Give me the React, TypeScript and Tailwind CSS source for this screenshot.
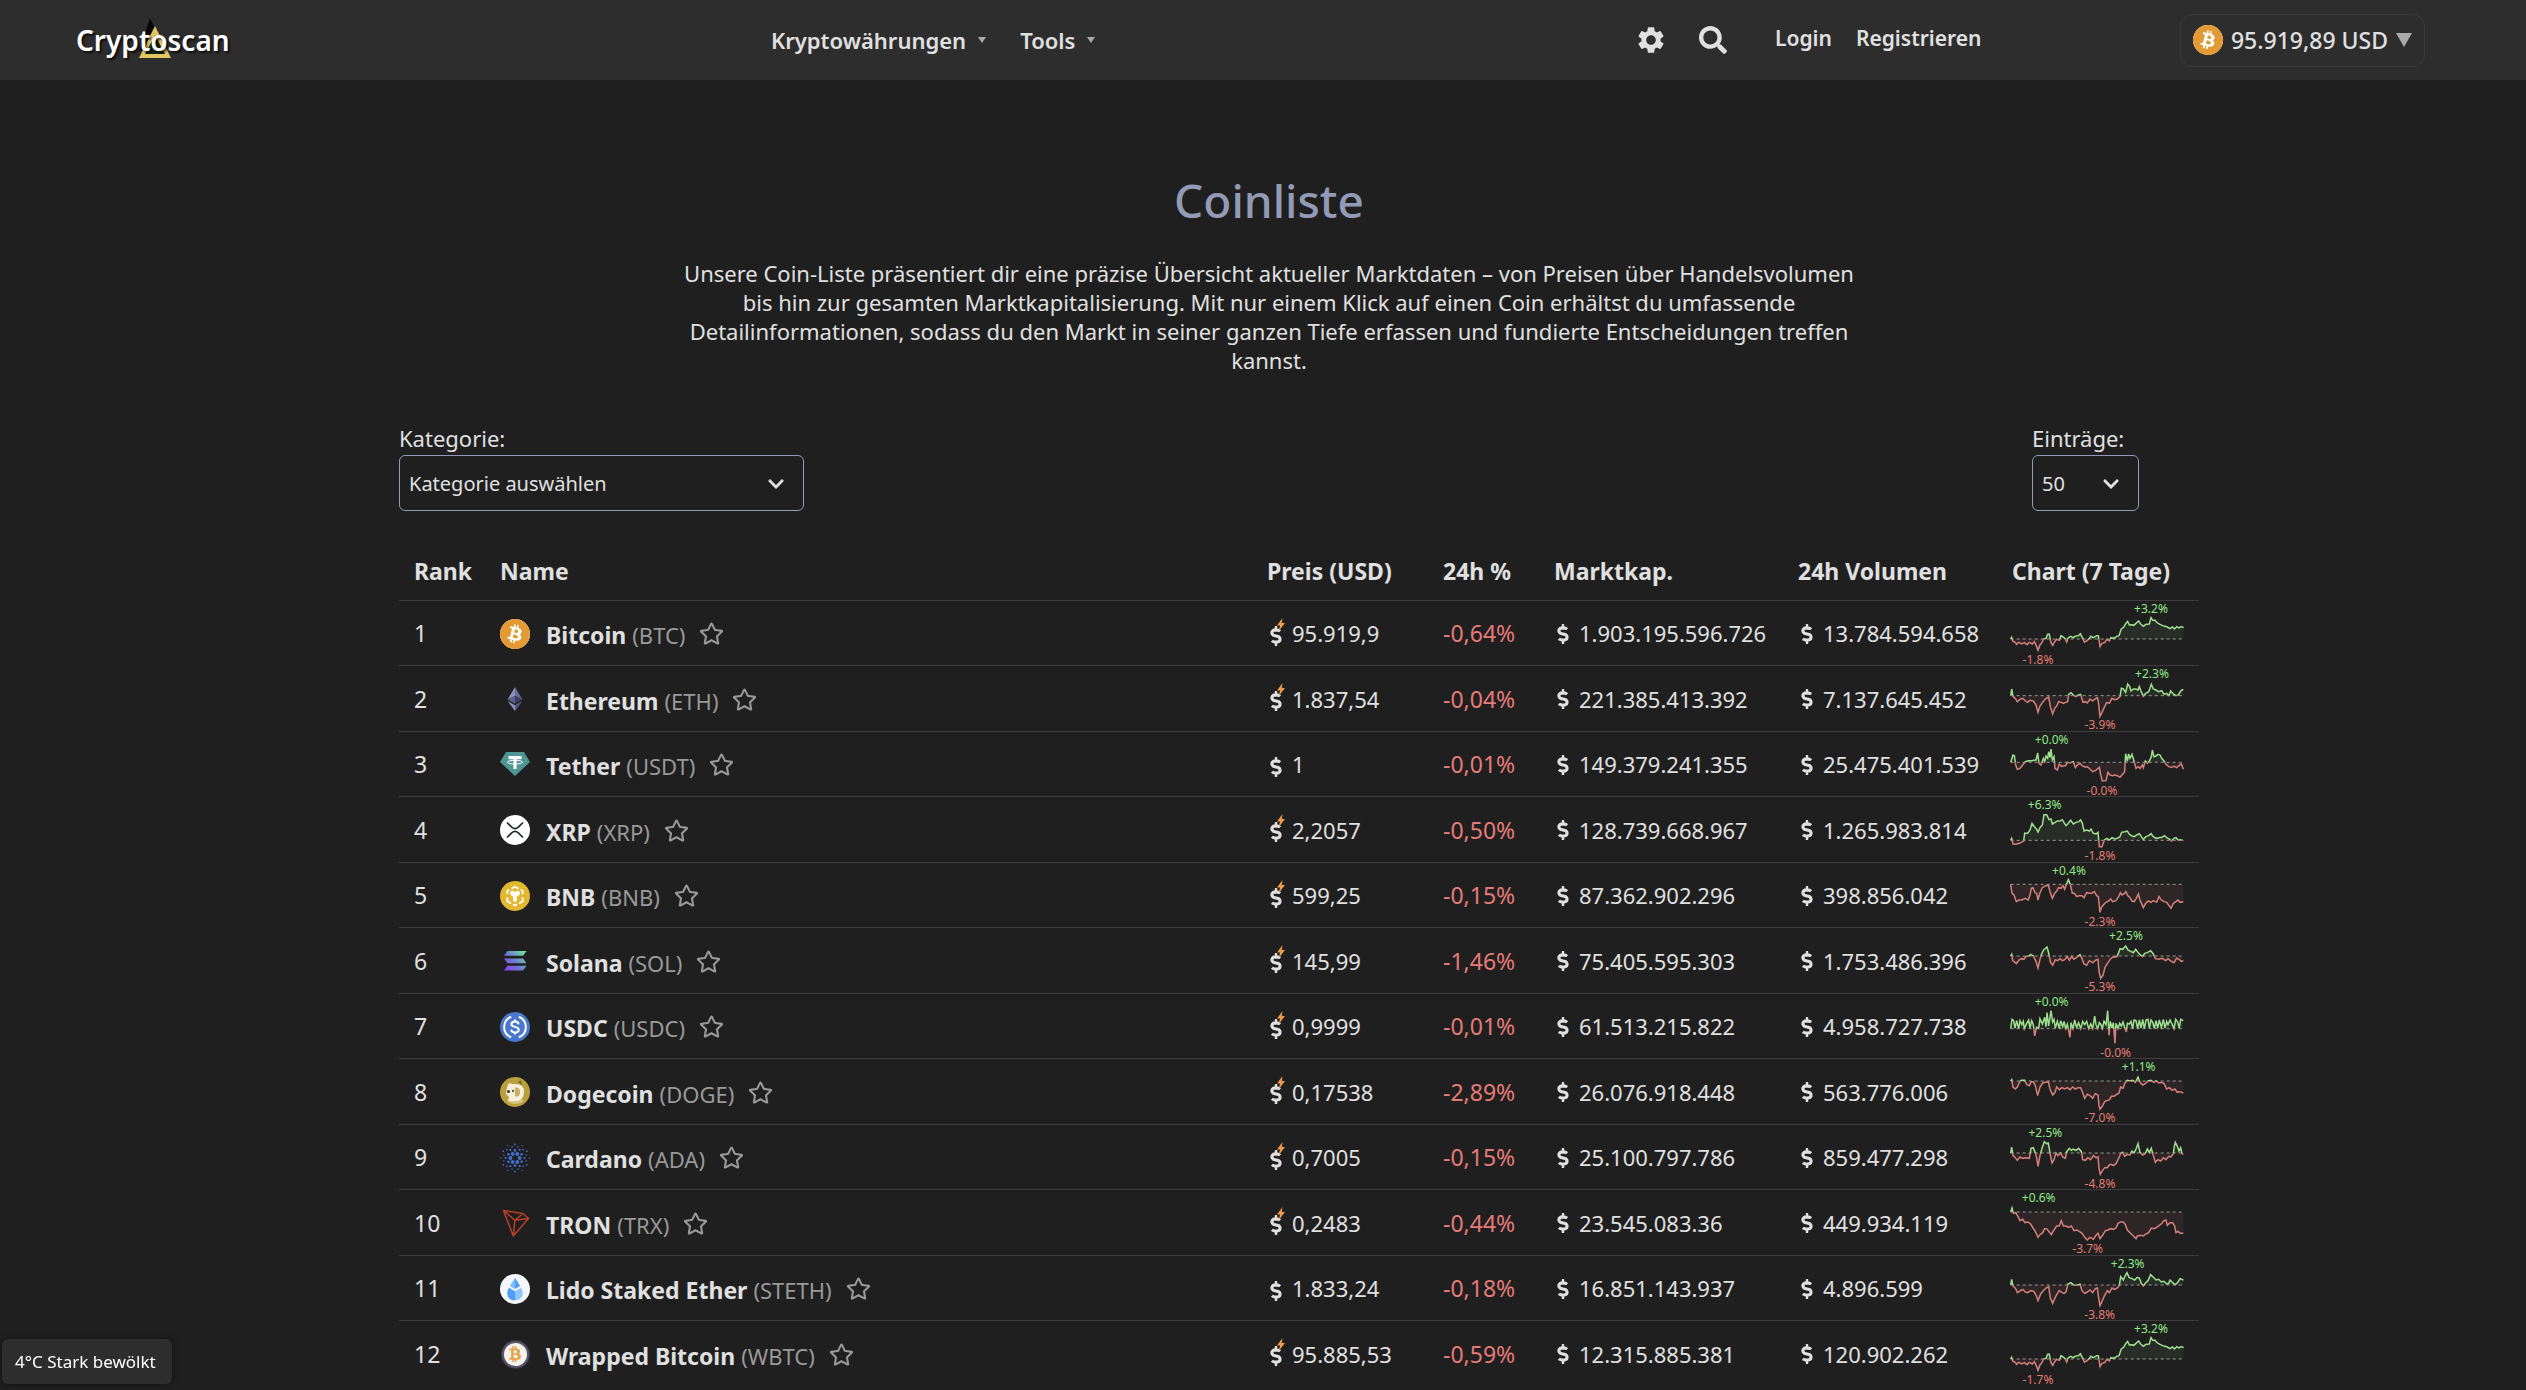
import { useId, type ReactNode } from "react";
import clsx from "clsx";
import { FaBtc, FaChevronDown, FaDollarSign, FaRegStar, FaSearch } from "react-icons/fa";
import { MdSettings } from "react-icons/md";
import { SiBitcoin } from "react-icons/si";

type Coin = {
  name: string;
  symbol: string;
  icon: ReactNode;
  price: string;
  live: boolean;
  change: string;
  cap: string;
  volume: string;
  chart: Spark;
};

type Spark = {
  base: number;
  points: string;
  high: [x: number, label: string];
  low: [x: number, label: string];
};

const BTC_POINTS =
  "0,114 3,109 6,120 13,124 18,130 24,124 33,129 41,125 49,131 56,124 65,129 71,122 76,132 82,148 87,134 94,124 98,115 106,112 111,100 116,100 120,122 126,133 132,122 138,115 146,118 151,104 158,108 164,114 168,123 173,110 180,106 188,110 195,105 203,104 209,98 215,110 221,123 228,120 236,112 241,106 248,110 258,104 263,104 268,137 274,127 282,125 289,115 296,120 301,110 310,112 318,106 325,104 332,84 339,79 345,68 351,61 356,72 364,71 370,73 378,65 384,60 390,69 398,76 406,70 416,69 421,50 426,58 433,58 440,66 448,70 456,74 463,76 470,78 478,83 485,78 491,84 498,77 505,81 512,77 519,80";

function BtcIcon() {
  return (
    <span className="flex size-[30px] items-center justify-center rounded-full bg-white">
      <SiBitcoin className="size-[30px] text-[#e39a34]" />
    </span>
  );
}

function EthIcon() {
  return (
    <svg viewBox="0 0 30 30" className="size-[30px]">
      <path d="M15 3 7.6 15.4 15 12z" fill="#8f90b6" />
      <path d="M15 3v9l7.4 3.4z" fill="#6a6c98" />
      <path d="M7.6 15.4 15 12v7.8z" fill="#5c5e8c" />
      <path d="M22.4 15.4 15 12v7.8z" fill="#3c3d68" />
      <path d="M7.6 16.9 15 27v-5.7z" fill="#8f90b6" />
      <path d="M22.4 16.9 15 27v-5.7z" fill="#5c5e8c" />
    </svg>
  );
}

function TetherIcon() {
  return (
    <svg viewBox="0 0 30 30" className="size-[30px]">
      <path d="M6 2h18l6 10-15 14L0 12z" fill="#4f9593" />
      <path d="M8.5 6h13v3.2h-4.9V19h-3.2V9.2H8.5z" fill="#fff" />
      <ellipse cx="15" cy="12.2" rx="7.6" ry="1.9" fill="none" stroke="#fff" />
    </svg>
  );
}

function XrpIcon() {
  return (
    <svg viewBox="0 0 30 30" className="size-[30px]">
      <circle cx="15" cy="15" r="15" fill="#fff" />
      <path
        d="M7 7.5l4.7 4.6q3.3 3 6.6 0L23 7.5M7 22.5l4.7-4.6q3.3-3 6.6 0l4.7 4.6"
        fill="none"
        stroke="#23292f"
        strokeWidth="1.7"
      />
    </svg>
  );
}

function BnbIcon() {
  return (
    <svg viewBox="0 0 30 30" className="size-[30px]">
      <circle cx="15" cy="15" r="15" fill="#e2b831" />
      <path
        d="M11.5 7.8 15 5.8l3.5 2M7.3 13v-3l2-1.2M22.7 13v-3l-2-1.2M7.3 16.5v3.7l3.7 2.2M22.7 16.5v3.7L19 22.4M13 23.3l2 1.2 2-1.2"
        fill="none"
        stroke="#fff"
        strokeWidth="1.8"
      />
      <path d="M10.3 10.8 12.5 9.5 15 11l2.5-1.5 2.2 1.3v3L17 15.5v4.3l-2 1.2-2-1.2v-4.3l-2.7-1.7z" fill="#fff" />
    </svg>
  );
}

function SolanaIcon() {
  return (
    <svg viewBox="0 0 30 30" className="size-[30px]">
      <defs>
        <linearGradient id="sol" x1="4" y1="25" x2="26" y2="5" gradientUnits="userSpaceOnUse">
          <stop offset="0.1" stopColor="#8a45f0" />
          <stop offset="0.5" stopColor="#6a80d0" />
          <stop offset="1" stopColor="#6ff09a" />
        </linearGradient>
      </defs>
      <path
        d="M7.5 5H26.5l-3.5 4.8H4zM4 12.4h19l3.5 4.8h-19zM7.5 19.8h19L23 24.6H4z"
        fill="url(#sol)"
      />
    </svg>
  );
}

function UsdcIcon() {
  return (
    <svg viewBox="0 0 30 30" className="size-[30px]">
      <circle cx="15" cy="15" r="15" fill="#4a78cc" />
      <g fill="none" stroke="#fff" strokeWidth="2">
        <path d="M11.2 4.8a10.9 10.9 0 0 0 0 20.4M18.8 4.8a10.9 10.9 0 0 1 0 20.4" />
        <path d="M18.6 12.3c-.2-1.8-1.6-2.7-3.6-2.7s-3.5 1-3.5 2.6c0 3.6 7.3 1.7 7.3 5.6 0 1.7-1.6 2.7-3.8 2.7s-3.6-1-3.8-2.9M15 7.5v2M15 20.5v2" />
      </g>
    </svg>
  );
}

function DogeIcon() {
  return (
    <svg viewBox="0 0 30 30" className="size-[30px]">
      <circle cx="15" cy="15" r="15" fill="#b8a03c" />
      <path d="M7 24q8-6 17 0-8 6-17 0z" fill="#d9c884" />
      <path d="M7 10l2-4 3 1h4q8 0 8 8 0 9-9 9H8l1-4-3-3z" fill="#f6efdd" />
      <path d="M15 10.5h1.2q3.8 0 3.8 4.5t-3.8 4.5H15z" fill="#c7b061" />
      <circle cx="8.5" cy="14.5" r="1.5" fill="#3c3217" />
      <circle cx="13" cy="14" r="1.2" fill="#6f5f2a" />
      <path d="m18 5 3-1.5L22 8z" fill="#6f5f2a" />
    </svg>
  );
}

const ADA_RINGS = [
  { count: 6, radius: 4.6, size: 2, turn: 0 },
  { count: 6, radius: 7.6, size: 1.3, turn: 30 },
  { count: 6, radius: 9.4, size: 1.1, turn: 0 },
  { count: 12, radius: 11.5, size: 0.8, turn: 15 },
  { count: 6, radius: 13.6, size: 0.9, turn: 30 },
  { count: 6, radius: 14.3, size: 0.7, turn: 0 },
];

function CardanoIcon() {
  return (
    <svg viewBox="0 0 30 30" className="size-[30px]" fill="#456dcb">
      {ADA_RINGS.map((ring, r) =>
        Array.from({ length: ring.count }, (_, i) => {
          const angle = ((i * 360) / ring.count + ring.turn) * (Math.PI / 180);
          return (
            <circle
              key={`${r}-${i}`}
              cx={15 + ring.radius * Math.cos(angle)}
              cy={15 + ring.radius * Math.sin(angle)}
              r={ring.size}
            />
          );
        })
      )}
    </svg>
  );
}

function TronIcon() {
  return (
    <svg viewBox="0 0 30 30" className="size-[30px]">
      <path
        d="M3.5 2.5 23 5.5l5.5 5L13.3 28zM3.5 2.5 15 12.2 23 5.5M15 12.2l13.5-1.7M15 12.2 13.3 28"
        fill="none"
        stroke="#b83e2b"
        strokeWidth="1.5"
        strokeLinejoin="round"
      />
    </svg>
  );
}

function LidoIcon() {
  return (
    <svg viewBox="0 0 30 30" className="size-[30px]">
      <circle cx="15" cy="15" r="15" fill="#f5f7fa" />
      <path d="M15 3.8 9.8 12 15 15z" fill="#7cbcff" />
      <path d="M15 3.8 20.2 12 15 15z" fill="#4f9ff7" />
      <path d="M9 13.8 15 17.3v9c-8 0-9.5-7.5-6-12.5z" fill="#4f9ff7" />
      <path d="M21 13.8 15 17.3v9c8 0 9.5-7.5 6-12.5z" fill="#8ec5ff" />
    </svg>
  );
}

function WbtcIcon() {
  return (
    <span className="flex size-[30px] items-center justify-center">
      <span className="flex size-[27px] items-center justify-center rounded-full border-2 border-[#5a5564] bg-[#f4f2ef] ring-1 ring-[#3a3644]">
        <FaBtc className="size-4 text-[#e8a24a]" />
      </span>
    </span>
  );
}

const COINS: Coin[] = [
  {
    name: "Bitcoin",
    symbol: "BTC",
    icon: <BtcIcon />,
    price: "95.919,9",
    live: true,
    change: "-0,64%",
    cap: "1.903.195.596.726",
    volume: "13.784.594.658",
    chart: { base: 114, points: BTC_POINTS, high: [421, "+3.2%"], low: [82, "-1.8%"] },
  },
  {
    name: "Ethereum",
    symbol: "ETH",
    icon: <EthIcon />,
    price: "1.837,54",
    live: true,
    change: "-0,04%",
    cap: "221.385.413.392",
    volume: "7.137.645.452",
    chart: {
      base: 89,
      points:
        "0,89 3,69 7,91 15,99 20,107 28,100 36,97 44,105 51,109 58,103 68,105 76,117 82,139 88,120 96,109 104,99 114,93 119,122 126,144 132,127 138,120 144,107 151,109 158,112 165,109 171,107 174,85 181,80 188,87 195,92 203,87 210,85 217,109 224,107 230,111 238,99 246,105 253,99 260,95 263,107 268,151 274,139 282,122 288,109 296,112 304,97 312,101 320,99 328,92 332,67 338,69 345,79 351,54 357,62 361,75 368,69 375,69 382,72 386,62 391,75 398,91 405,82 414,77 422,55 428,69 436,72 444,77 453,74 460,85 468,82 475,89 480,75 488,84 496,89 503,87 511,74 518,70",
      high: [424, "+2.3%"],
      low: [268, "-3.9%"],
    },
  },
  {
    name: "Tether",
    symbol: "USDT",
    icon: <TetherIcon />,
    price: "1",
    live: false,
    change: "-0,01%",
    cap: "149.379.241.355",
    volume: "25.475.401.539",
    chart: {
      base: 91,
      points:
        "0,91 7,69 11,71 15,99 20,112 28,109 36,99 44,89 53,86 63,86 76,84 81,63 85,94 91,99 98,79 102,89 106,72 111,79 114,59 118,77 121,51 125,84 130,74 133,109 140,114 146,97 154,104 160,101 165,101 170,91 178,93 188,89 194,107 200,99 208,94 214,101 222,105 230,104 238,111 246,119 254,116 260,111 266,106 270,129 275,147 286,146 292,121 298,129 306,131 312,129 320,131 328,136 336,127 342,119 345,65 350,87 354,66 358,79 364,67 370,87 376,109 382,104 388,109 395,99 398,107 404,87 410,94 416,87 422,74 425,54 430,74 436,72 442,67 448,69 453,79 460,87 466,97 474,104 482,106 490,103 498,107 505,101 512,96 518,112",
      high: [123, "+0.0%"],
      low: [274, "-0.0%"],
    },
  },
  {
    name: "XRP",
    symbol: "XRP",
    icon: <XrpIcon />,
    price: "2,2057",
    live: true,
    change: "-0,50%",
    cap: "128.739.668.967",
    volume: "1.265.983.814",
    chart: {
      base: 130,
      points:
        "0,130 3,124 7,141 15,142 26,139 36,134 39,132 42,109 51,109 58,99 64,79 71,89 76,94 82,105 88,92 95,84 100,53 108,53 115,68 121,66 125,81 133,76 140,72 148,72 155,68 160,77 166,86 171,81 180,70 188,81 196,76 204,74 210,69 215,79 220,102 228,99 236,102 241,96 248,109 256,111 262,106 266,149 274,149 281,129 288,124 296,129 304,122 312,126 320,124 328,119 333,106 342,104 350,102 356,112 364,117 371,119 378,114 386,110 392,119 398,127 406,119 414,116 421,110 428,119 436,124 446,122 454,121 461,116 468,122 476,126 482,132 490,124 496,122 503,130 510,128 518,131",
      high: [102, "+6.3%"],
      low: [268, "-1.8%"],
    },
  },
  {
    name: "BNB",
    symbol: "BNB",
    icon: <BnbIcon />,
    price: "599,25",
    live: true,
    change: "-0,15%",
    cap: "87.362.902.296",
    volume: "398.856.042",
    chart: {
      base: 64,
      points:
        "0,64 4,91 10,96 17,116 25,111 34,111 43,106 53,111 58,96 62,76 67,74 73,89 78,91 82,111 88,89 95,74 102,70 113,66 118,86 125,106 132,91 138,84 144,74 151,76 157,68 162,79 168,62 173,50 179,64 185,91 191,91 198,101 206,98 214,98 220,104 228,89 236,91 244,91 251,86 258,98 263,101 268,148 272,134 278,126 286,118 294,114 300,108 306,116 316,113 324,101 329,89 334,96 342,91 346,86 351,98 358,104 364,114 371,116 378,104 383,93 388,111 398,134 405,121 413,114 421,118 428,113 438,118 445,101 452,111 460,116 468,118 476,129 481,136 488,121 496,116 502,111 508,118 518,116",
      high: [175, "+0.4%"],
      low: [268, "-2.3%"],
    },
  },
  {
    name: "Solana",
    symbol: "SOL",
    icon: <SolanaIcon />,
    price: "145,99",
    live: true,
    change: "-1,46%",
    cap: "75.405.595.303",
    volume: "1.753.486.396",
    chart: {
      base: 84,
      points:
        "0,84 3,79 6,98 17,107 25,96 33,92 40,94 45,86 54,84 60,79 68,84 76,100 82,120 87,98 93,77 99,66 109,57 114,75 119,102 126,112 134,95 141,98 148,92 155,98 162,95 170,86 176,97 183,86 190,94 198,88 208,80 214,92 220,108 228,112 236,98 246,104 256,96 262,94 265,130 270,151 277,142 283,118 292,104 300,92 309,86 318,87 324,74 328,62 336,64 345,54 352,66 360,70 368,74 375,64 384,76 395,86 402,76 410,74 420,68 428,78 434,92 445,94 455,91 465,98 472,92 482,100 490,104 498,90 505,94 512,100 518,98",
      high: [346, "+2.5%"],
      low: [268, "-5.3%"],
    },
  },
  {
    name: "USDC",
    symbol: "USDC",
    icon: <UsdcIcon />,
    price: "0,9999",
    live: true,
    change: "-0,01%",
    cap: "61.513.215.822",
    volume: "4.958.727.738",
    chart: {
      base: 104,
      points:
        "0,104 4,76 9,80 13,102 18,80 24,104 28,80 34,92 38,82 41,104 48,88 54,78 58,102 63,80 68,92 72,126 78,100 84,104 88,74 95,90 102,70 106,98 109,56 114,96 121,50 126,84 130,76 134,102 140,82 146,104 150,80 156,98 160,82 165,104 170,90 178,130 181,86 187,104 192,78 198,100 204,86 210,104 216,82 222,92 228,82 234,104 240,90 246,104 252,66 256,92 261,104 266,86 271,92 275,104 280,82 286,92 291,50 295,124 299,82 304,102 308,86 313,148 316,88 322,104 327,88 332,96 337,84 343,104 347,114 350,88 356,90 361,82 366,104 370,78 376,80 381,104 386,78 391,102 396,76 401,104 406,78 412,76 416,102 421,78 426,84 431,104 436,80 441,102 446,78 452,100 458,76 463,102 468,82 472,92 478,78 484,90 490,104 495,76 501,84 506,102 510,76 518,80",
      high: [123, "+0.0%"],
      low: [315, "-0.0%"],
    },
  },
  {
    name: "Dogecoin",
    symbol: "DOGE",
    icon: <DogeIcon />,
    price: "0,17538",
    live: true,
    change: "-2,89%",
    cap: "26.076.918.448",
    volume: "563.776.006",
    chart: {
      base: 66,
      points:
        "0,66 3,62 7,84 14,90 20,84 26,70 32,64 42,64 48,76 56,80 62,68 68,68 74,80 81,110 88,84 96,72 104,70 113,68 118,90 126,108 133,100 138,84 146,92 154,86 162,90 170,86 178,92 186,84 194,90 202,86 210,86 218,106 222,118 230,106 238,110 246,118 254,104 262,108 265,140 268,151 275,142 282,128 290,124 297,122 302,112 310,112 318,106 325,102 330,84 337,88 343,72 350,64 358,66 366,64 374,70 382,54 388,70 396,78 404,74 412,66 420,64 430,70 436,66 444,72 452,70 460,74 468,90 476,86 484,94 492,90 500,100 508,98 518,102",
      high: [384, "+1.1%"],
      low: [268, "-7.0%"],
    },
  },
  {
    name: "Cardano",
    symbol: "ADA",
    icon: <CardanoIcon />,
    price: "0,7005",
    live: true,
    change: "-0,15%",
    cap: "25.100.797.786",
    volume: "859.477.298",
    chart: {
      base: 84,
      points:
        "0,84 3,66 7,92 14,98 20,106 28,96 36,100 44,98 56,100 61,70 68,68 74,84 78,98 82,124 88,92 94,70 101,50 108,56 113,54 118,84 124,114 130,104 136,84 142,92 150,84 156,96 164,100 168,80 176,70 182,76 188,72 196,76 204,70 212,80 216,104 224,106 232,98 240,104 248,92 256,98 262,96 265,130 269,148 276,136 282,128 290,128 296,120 302,118 308,122 316,116 324,100 330,86 336,82 342,94 350,88 358,90 364,78 370,84 376,72 382,56 388,82 396,90 404,86 410,72 416,82 422,70 428,92 434,112 442,104 450,108 458,98 466,104 474,94 480,96 488,86 491,64 494,52 500,64 505,78 510,68 514,86 518,88",
      high: [104, "+2.5%"],
      low: [268, "-4.8%"],
    },
  },
  {
    name: "TRON",
    symbol: "TRX",
    icon: <TronIcon />,
    price: "0,2483",
    live: true,
    change: "-0,44%",
    cap: "23.545.083.36",
    volume: "449.934.119",
    chart: {
      base: 66,
      points:
        "0,66 4,54 8,70 15,68 22,80 28,92 36,88 43,98 52,96 60,102 67,114 74,124 82,142 88,134 96,128 102,116 108,116 114,124 122,134 130,120 138,108 146,108 152,92 158,108 166,108 174,112 182,108 190,122 198,120 206,124 214,130 222,142 230,150 238,142 248,148 256,136 262,130 268,146 276,136 284,122 292,120 300,116 308,118 316,114 322,100 330,96 338,96 344,104 350,120 358,128 366,136 376,146 380,138 390,136 398,138 406,132 414,128 422,114 430,116 438,112 446,106 454,100 460,92 466,90 470,106 478,98 486,98 492,108 496,128 502,124 508,130 518,130",
      high: [84, "+0.6%"],
      low: [231, "-3.7%"],
    },
  },
  {
    name: "Lido Staked Ether",
    symbol: "STETH",
    icon: <LidoIcon />,
    price: "1.833,24",
    live: false,
    change: "-0,18%",
    cap: "16.851.143.937",
    volume: "4.896.599",
    chart: {
      base: 87,
      points:
        "0,87 3,70 7,90 15,98 20,110 28,105 36,100 44,108 51,110 60,104 70,106 76,118 82,134 90,114 98,104 106,96 114,92 119,126 126,142 132,128 138,116 146,104 154,110 160,112 166,108 172,84 181,80 190,88 200,88 208,84 214,104 222,112 230,108 238,102 246,110 254,98 260,96 263,120 268,149 274,136 282,118 290,104 296,110 304,96 312,100 320,96 326,88 330,62 338,72 343,60 349,50 355,64 364,68 372,72 380,64 386,66 392,82 398,90 405,80 412,74 420,56 428,64 436,72 444,70 452,78 460,76 468,84 474,82 478,72 486,80 494,86 502,78 508,68 518,72",
      high: [351, "+2.3%"],
      low: [267, "-3.8%"],
    },
  },
  {
    name: "Wrapped Bitcoin",
    symbol: "WBTC",
    icon: <WbtcIcon />,
    price: "95.885,53",
    live: true,
    change: "-0,59%",
    cap: "12.315.885.381",
    volume: "120.902.262",
    chart: { base: 114, points: BTC_POINTS, high: [421, "+3.2%"], low: [82, "-1.7%"] },
  },
];

function Sparkline({ base, points, high, low }: Spark) {
  const id = useId();
  const area = `0,${base} ${points} 518,${base}`;

  return (
    <svg viewBox="4 0 522 195" className="block h-[65px] w-[174px] overflow-visible">
      <clipPath id={`${id}-up`}>
        <rect x="-3" y="0" width="528" height={base} />
      </clipPath>
      <clipPath id={`${id}-down`}>
        <rect x="-3" y={base} width="528" height={195 - base} />
      </clipPath>
      <line x1="0" x2="518" y1={base} y2={base} stroke="#999" strokeWidth="3" strokeDasharray="9 9" />
      <g clipPath={`url(#${id}-up)`}>
        <polygon points={area} fill="#98e08a" fillOpacity="0.08" />
        <polyline points={points} fill="none" stroke="#9fe08f" strokeWidth="4.5" />
      </g>
      <g clipPath={`url(#${id}-down)`}>
        <polygon points={area} fill="#e0807a" fillOpacity="0.08" />
        <polyline points={points} fill="none" stroke="#d4807a" strokeWidth="4.5" />
      </g>
      <g fontSize="36" textAnchor="middle">
        <text x={high[0]} y="36" fill="#8fe888">
          {high[1]}
        </text>
        <text x={low[0]} y="189" fill="#e57b73">
          {low[1]}
        </text>
      </g>
    </svg>
  );
}

function Amount({ value }: { value: string }) {
  return (
    <span className="flex items-center gap-[7px] text-[22px] whitespace-nowrap">
      <FaDollarSign className="h-5 w-[18px] shrink-0" />
      {value}
    </span>
  );
}

function Price({ value, live }: { value: string; live: boolean }) {
  return (
    <span className="flex items-center gap-[7px] text-[22px]">
      <span className="relative pt-1">
        <FaDollarSign className="h-5 w-[18px]" />
        {live && (
          <svg viewBox="0 0 8 13" className="absolute -top-1 right-0 h-[13px] w-2">
            <path d="M5.5 0 0 7.5h3L1.8 13 8 5H4.8z" fill="#ec9a4b" />
          </svg>
        )}
      </span>
      {value}
    </span>
  );
}

function Logo() {
  return (
    <a href="/" className="relative text-[28px] leading-[36px] font-semibold text-white" aria-label="Cryptoscan">
      <svg viewBox="0 0 34 44" className="absolute -top-1 left-[62px] h-11 w-[34px]">
        <path d="M12 0 1 33h9l8-21z" fill="#080808" />
        <path d="M17 8 1 40h32z" fill="#e3c562" />
        <path d="M17 17 7 36h20z" fill="#15240f" />
      </svg>
      <span className="relative [text-shadow:2px_2px_2px_#000a]">Cryptoscan</span>
    </a>
  );
}

function Header() {
  return (
    <header className="grid h-20 grid-cols-[695px_1fr_auto] items-center bg-[#2d2d2d] pr-[101px] pl-[76px]">
      <Logo />
      <div className="flex items-center">
        <nav className="flex w-[864px] gap-[34px] text-[22px] font-semibold">
          <button className="flex items-center gap-3">
            Kryptowährungen
            <span className="border-x-4 border-t-[6px] border-x-transparent border-t-[#aaa]" />
          </button>
          <button className="flex items-center gap-3">
            Tools
            <span className="border-x-4 border-t-[6px] border-x-transparent border-t-[#aaa]" />
          </button>
        </nav>
        <button aria-label="Einstellungen">
          <MdSettings className="size-8" />
        </button>
        <button aria-label="Suche" className="ml-8">
          <FaSearch className="size-7" />
        </button>
        <div className="mb-0.5 ml-12 flex gap-6 text-[21px] font-semibold">
          <a href="/login">Login</a>
          <a href="/register">Registrieren</a>
        </div>
      </div>
      <button className="flex h-[53px] items-center gap-2 rounded-xl border border-[#3a3a3a] px-3 text-[23px] font-medium">
        <BtcIcon />
        95.919,89 USD
        <span className="border-x-8 border-t-[14px] border-x-transparent border-t-[#aaa]" />
      </button>
    </header>
  );
}

function Picker({ id, label, options, className }: { id: string; label: string; options: string[]; className: string }) {
  return (
    <div className={className}>
      <label htmlFor={id} className="block text-[22px] leading-[33px]">
        {label}
      </label>
      <div className="relative">
        <select
          id={id}
          className="h-14 w-full appearance-none rounded-md border border-[#929ab5] bg-[#1f1f1f] px-[9px] pt-0.5 text-[20px]"
        >
          {options.map((option) => (
            <option key={option}>{option}</option>
          ))}
        </select>
        <FaChevronDown className="pointer-events-none absolute top-5 right-[19px] size-[18px]" />
      </div>
    </div>
  );
}

function CoinTable() {
  return (
    <table className="mt-[33px] w-[1800px] table-fixed text-left">
      <colgroup>
        <col className="w-[86px]" />
        <col />
        <col className="w-[176px]" />
        <col className="w-[111px]" />
        <col className="w-[244px]" />
        <col className="w-[214px]" />
        <col className="w-[202px]" />
      </colgroup>
      <thead>
        <tr className="h-14 border-b border-[#3d3d3d] text-[23px] *:px-[15px] *:pb-0.5 *:font-bold">
          <th>Rank</th>
          <th>Name</th>
          <th>Preis (USD)</th>
          <th>24h %</th>
          <th>Marktkap.</th>
          <th>24h Volumen</th>
          <th>Chart (7 Tage)</th>
        </tr>
      </thead>
      <tbody>
        {COINS.map((coin, i) => (
          <tr
            key={coin.symbol}
            className={clsx(
              "border-[#3d3d3d] *:px-[15px] *:py-0",
              i % 2 ? "h-[66px]" : "h-[65px]",
              i < COINS.length - 1 && "border-b"
            )}
          >
            <td>
              <div className="pt-0.5">{i + 1}</div>
            </td>
            <td>
              <div className="flex items-center pt-0.5">
                {coin.icon}
                <span className="mt-1 ml-4 font-bold">{coin.name}</span>
                <span className="mt-1 ml-1.5 text-[22px] text-[#999]">({coin.symbol})</span>
                <button aria-label={`${coin.name} merken`} className="ml-3.5">
                  <FaRegStar className="size-[25px] text-[#999]" />
                </button>
              </div>
            </td>
            <td>
              <div className="pt-0.5">
                <Price value={coin.price} live={coin.live} />
              </div>
            </td>
            <td>
              <div className="pt-0.5 text-[#e57b78]">{coin.change}</div>
            </td>
            <td>
              <div className="pt-0.5">
                <Amount value={coin.cap} />
              </div>
            </td>
            <td>
              <div className="pt-0.5">
                <Amount value={coin.volume} />
              </div>
            </td>
            <td>
              <div className="h-16">
                <Sparkline {...coin.chart} />
              </div>
            </td>
          </tr>
        ))}
      </tbody>
    </table>
  );
}

export default function App() {
  return (
    <div className="h-screen overflow-hidden bg-[#1f1f1f] font-['Noto_Sans','Open_Sans',sans-serif] text-[23px] text-[#e0e0e0]">
      <Header />
      <main className="pl-3">
        <h1 className="mt-[88px] text-center text-[46px] leading-[64px] font-medium text-[#929ab5]">Coinliste</h1>
        <p className="mx-auto mt-[27px] max-w-[1200px] text-center text-[22px] leading-[29px]">
          Unsere Coin-Liste präsentiert dir eine präzise Übersicht aktueller Marktdaten – von Preisen über Handelsvolumen
          bis hin zur gesamten Marktkapitalisierung. Mit nur einem Klick auf einen Coin erhältst du umfassende
          Detailinformationen, sodass du den Markt in seiner ganzen Tiefe erfassen und fundierte Entscheidungen treffen
          kannst.
        </p>
        <div className="mx-auto mt-[47px] max-w-[1740px]">
          <div className="flex justify-between">
            <Picker
              id="category"
              label="Kategorie:"
              options={["Kategorie auswählen", "DeFi", "Stablecoins"]}
              className="w-[405px]"
            />
            <Picker id="entries" label="Einträge:" options={["50", "100", "250"]} className="w-[107px]" />
          </div>
          <CoinTable />
        </div>
      </main>
      <div className="fixed bottom-1.5 left-0.5 rounded-md bg-[#2d2d2d] py-[11px] pr-4 pl-[13px] text-[17px] leading-[23px] text-white shadow-[0_0_6px_#0008]">
        4°C Stark bewölkt
      </div>
    </div>
  );
}
